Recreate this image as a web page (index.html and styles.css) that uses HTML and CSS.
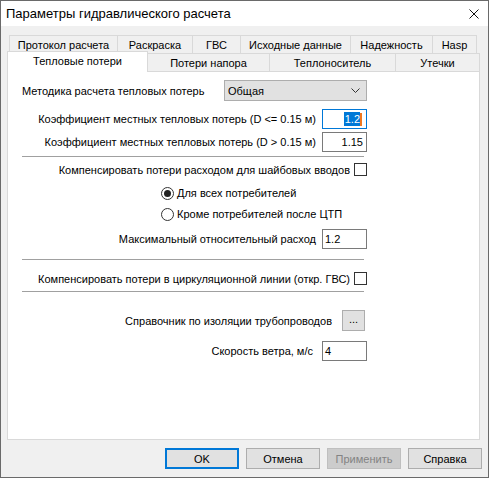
FILE: index.html
```html
<!DOCTYPE html>
<html lang="ru">
<head>
<meta charset="utf-8">
<title>Параметры гидравлического расчета</title>
<link rel="stylesheet" href="styles.css">
</head>
<body>
<div class="window">
  <div class="titlebar">
    <span class="title">Параметры гидравлического расчета</span>
    <svg class="close" width="10" height="10" viewBox="0 0 10 10"><path d="M0.5 0.5 L9.5 9.5 M9.5 0.5 L0.5 9.5" stroke="#111" stroke-width="1" fill="none"/></svg>
  </div>
  <div class="client">
    <div class="tabrow back">
      <div class="tab t1">Протокол расчета</div>
      <div class="tab t2">Раскраска</div>
      <div class="tab t3">ГВС</div>
      <div class="tab t4">Исходные данные</div>
      <div class="tab t5">Надежность</div>
      <div class="tab t6">Hasp</div>
    </div>
    <div class="tabrow front">
      <div class="tab selected">Тепловые потери</div>
      <div class="tab t7">Потери напора</div>
      <div class="tab t8">Теплоноситель</div>
      <div class="tab t9">Утечки</div>
    </div>
    <div class="panel">
      <div class="form">
        <div class="row row-combo">
          <span class="label">Методика расчета тепловых потерь</span>
          <div class="combo">
            <span>Общая</span>
            <svg class="chev" width="9" height="5" viewBox="0 0 9 5"><path d="M0.5 0.5 L4.5 4.5 L8.5 0.5" stroke="#333" stroke-width="1" fill="none"/></svg>
          </div>
        </div>
        <div class="row row-k1">
          <span class="label">Коэффициент местных тепловых потерь (D &lt;= 0.15 м)</span>
          <div class="edit focused right"><span class="sel">1.2</span><span class="caret"></span></div>
        </div>
        <div class="row row-k2">
          <span class="label">Коэффициент местных тепловых потерь (D &gt; 0.15 м)</span>
          <div class="edit right">1.15</div>
        </div>
        <div class="sep sep1"></div>
        <div class="row row-check1">
          <span class="label">Компенсировать потери расходом для шайбовых вводов</span>
          <span class="check"></span>
        </div>
        <div class="radio-row radio1">
          <span class="radio on"></span><span class="label">Для всех потребителей</span>
        </div>
        <div class="radio-row radio2">
          <span class="radio"></span><span class="label">Кроме потребителей после ЦТП</span>
        </div>
        <div class="row row-max">
          <span class="label">Максимальный относительный расход</span>
          <div class="edit left">1.2</div>
        </div>
        <div class="sep sep2"></div>
        <div class="row row-check2">
          <span class="label">Компенсировать потери в циркуляционной линии (откр. ГВС)</span>
          <span class="check"></span>
        </div>
        <div class="sep sep3"></div>
        <div class="row row-ref">
          <span class="label">Справочник по изоляции трубопроводов</span>
          <div class="dots">...</div>
        </div>
        <div class="row row-wind">
          <span class="label">Скорость ветра, м/с</span>
          <div class="edit left">4</div>
        </div>
      </div>
    </div>
    <div class="buttons">
      <div class="btn default">OK</div>
      <div class="btn">Отмена</div>
      <div class="btn disabled">Применить</div>
      <div class="btn">Справка</div>
    </div>
  </div>
</div>
</body>
</html>
```
FILE: styles.css
```css
* { box-sizing: border-box; }
html, body { margin: 0; padding: 0; }
body {
  width: 489px;
  height: 478px;
  font-family: "Liberation Sans", Arial, sans-serif;
  font-size: 11px;
  color: #000;
  background: #f0f0f0;
}
.window {
  width: 489px;
  height: 478px;
  border: 1px solid #6a6a6a;
  display: flex;
  flex-direction: column;
}
.titlebar {
  height: 25px;
  background: #fff;
  display: flex;
  align-items: center;
  justify-content: space-between;
  padding: 0 9px 0 5px;
}
.title {
  font-size: 13px;
  color: #000;
  white-space: nowrap;
}
.close { display: block; margin-top: 1px; }
.client {
  flex: 1;
  background: #f0f0f0;
  padding-top: 9px;
  display: flex;
  flex-direction: column;
}
.tabrow { display: flex; }
.tab {
  height: 18px;
  border: 1px solid #d9d9d9;
  border-bottom: none;
  background: #f0f0f0;
  display: flex;
  align-items: center;
  justify-content: center;
  margin-left: -1px;
  color: #000;
  white-space: nowrap;
  padding-top: 1px;
}
.back { margin-left: 8px; }
.back .tab:first-child { margin-left: 0; }
.t1 { width: 109px; }
.t2 { width: 76px; }
.t3 { width: 49px; }
.t4 { width: 111px; }
.t5 { width: 83px; }
.t6 { width: 45px; }
.front {
  margin-left: 6px;
  margin-top: -2px;
  margin-bottom: -1px;
  align-items: flex-start;
  position: relative;
  z-index: 1;
}
.front .tab { margin-top: 2px; }
.front .selected {
  margin-left: 0;
  margin-top: 0;
  width: 141px;
  height: 21px;
  background: #fff;
  padding-top: 0;
  padding-bottom: 3px;
}
.t7 { width: 123px; }
.t8 { width: 127px; }
.t9 { width: 85px; }
.panel {
  margin-left: 6px;
  width: 473px;
  height: 369px;
  background: #fff;
  border: 1px solid #d9d9d9;
  padding: 8px 0 0 14px;
}
.form {
  width: 345px;
  display: flex;
  flex-direction: column;
}
.label { white-space: nowrap; }
.row {
  display: flex;
  align-items: center;
  justify-content: flex-end;
  gap: 6px;
}
.row-combo { justify-content: space-between; height: 21px; }
.combo {
  width: 143px;
  height: 21px;
  background: #e1e1e1;
  border: 1px solid #adadad;
  display: flex;
  align-items: center;
  justify-content: space-between;
  padding: 0 6px 0 3px;
}
.chev { display: block; }
.edit {
  width: 45px;
  height: 20px;
  border: 1px solid #7a7a7a;
  background: #fff;
  display: flex;
  align-items: center;
  padding: 0 3px;
  flex: none;
}
.edit.right { justify-content: flex-end; }
.edit.left { justify-content: flex-start; padding-left: 2px; }
.edit.focused { border-color: #0078d7; padding-right: 4px; }
.sel { background: #0078d7; color: #fff; line-height: 14px; padding: 0 0 0 1px; }
.caret { width: 2px; height: 13px; background: #f07820; }
.row-k1 { margin-top: 8px; height: 20px; }
.row-k2 { margin-top: 3px; height: 20px; }
.sep {
  height: 1px;
  width: 342px;
  background: #a0a0a0;
}
.sep1 { margin-top: 4px; }
.row-check1 { margin-top: 6px; height: 13px; gap: 4px; }
.check {
  width: 13px;
  height: 13px;
  border: 1px solid #333;
  background: #fff;
  flex: none;
}
.radio-row {
  display: flex;
  align-items: center;
  height: 16px;
  padding-left: 139px;
  gap: 3px;
}
.radio1 { margin-top: 9px; }
.radio2 { margin-top: 5px; }
.radio {
  width: 13px;
  height: 13px;
  border: 1px solid #333;
  border-radius: 50%;
  background: #fff;
  display: flex;
  align-items: center;
  justify-content: center;
  flex: none;
}
.radio.on::after {
  content: "";
  width: 7px;
  height: 7px;
  border-radius: 50%;
  background: #222;
}
.row-max { margin-top: 7px; height: 20px; }
.sep2 { margin-top: 10px; }
.row-check2 { margin-top: 12px; height: 13px; gap: 4px; }
.sep3 { margin-top: 6px; }
.row-ref { margin-top: 18px; height: 21px; gap: 10px; padding-right: 2px; }
.dots {
  width: 23px;
  height: 21px;
  background: #e1e1e1;
  border: 1px solid #adadad;
  display: flex;
  align-items: center;
  justify-content: center;
  padding-bottom: 3px;
}
.row-wind { margin-top: 10px; height: 20px; gap: 9px; }
.buttons {
  display: flex;
  justify-content: flex-end;
  gap: 7px;
  margin-top: 8px;
  padding-right: 6px;
}
.btn {
  width: 74px;
  height: 21px;
  background: #e1e1e1;
  border: 1px solid #adadad;
  display: flex;
  align-items: center;
  justify-content: center;
}
.btn.default { border: 2px solid #0078d7; }
.btn.disabled { background: #cccccc; border-color: #bfbfbf; color: #838383; }
```
